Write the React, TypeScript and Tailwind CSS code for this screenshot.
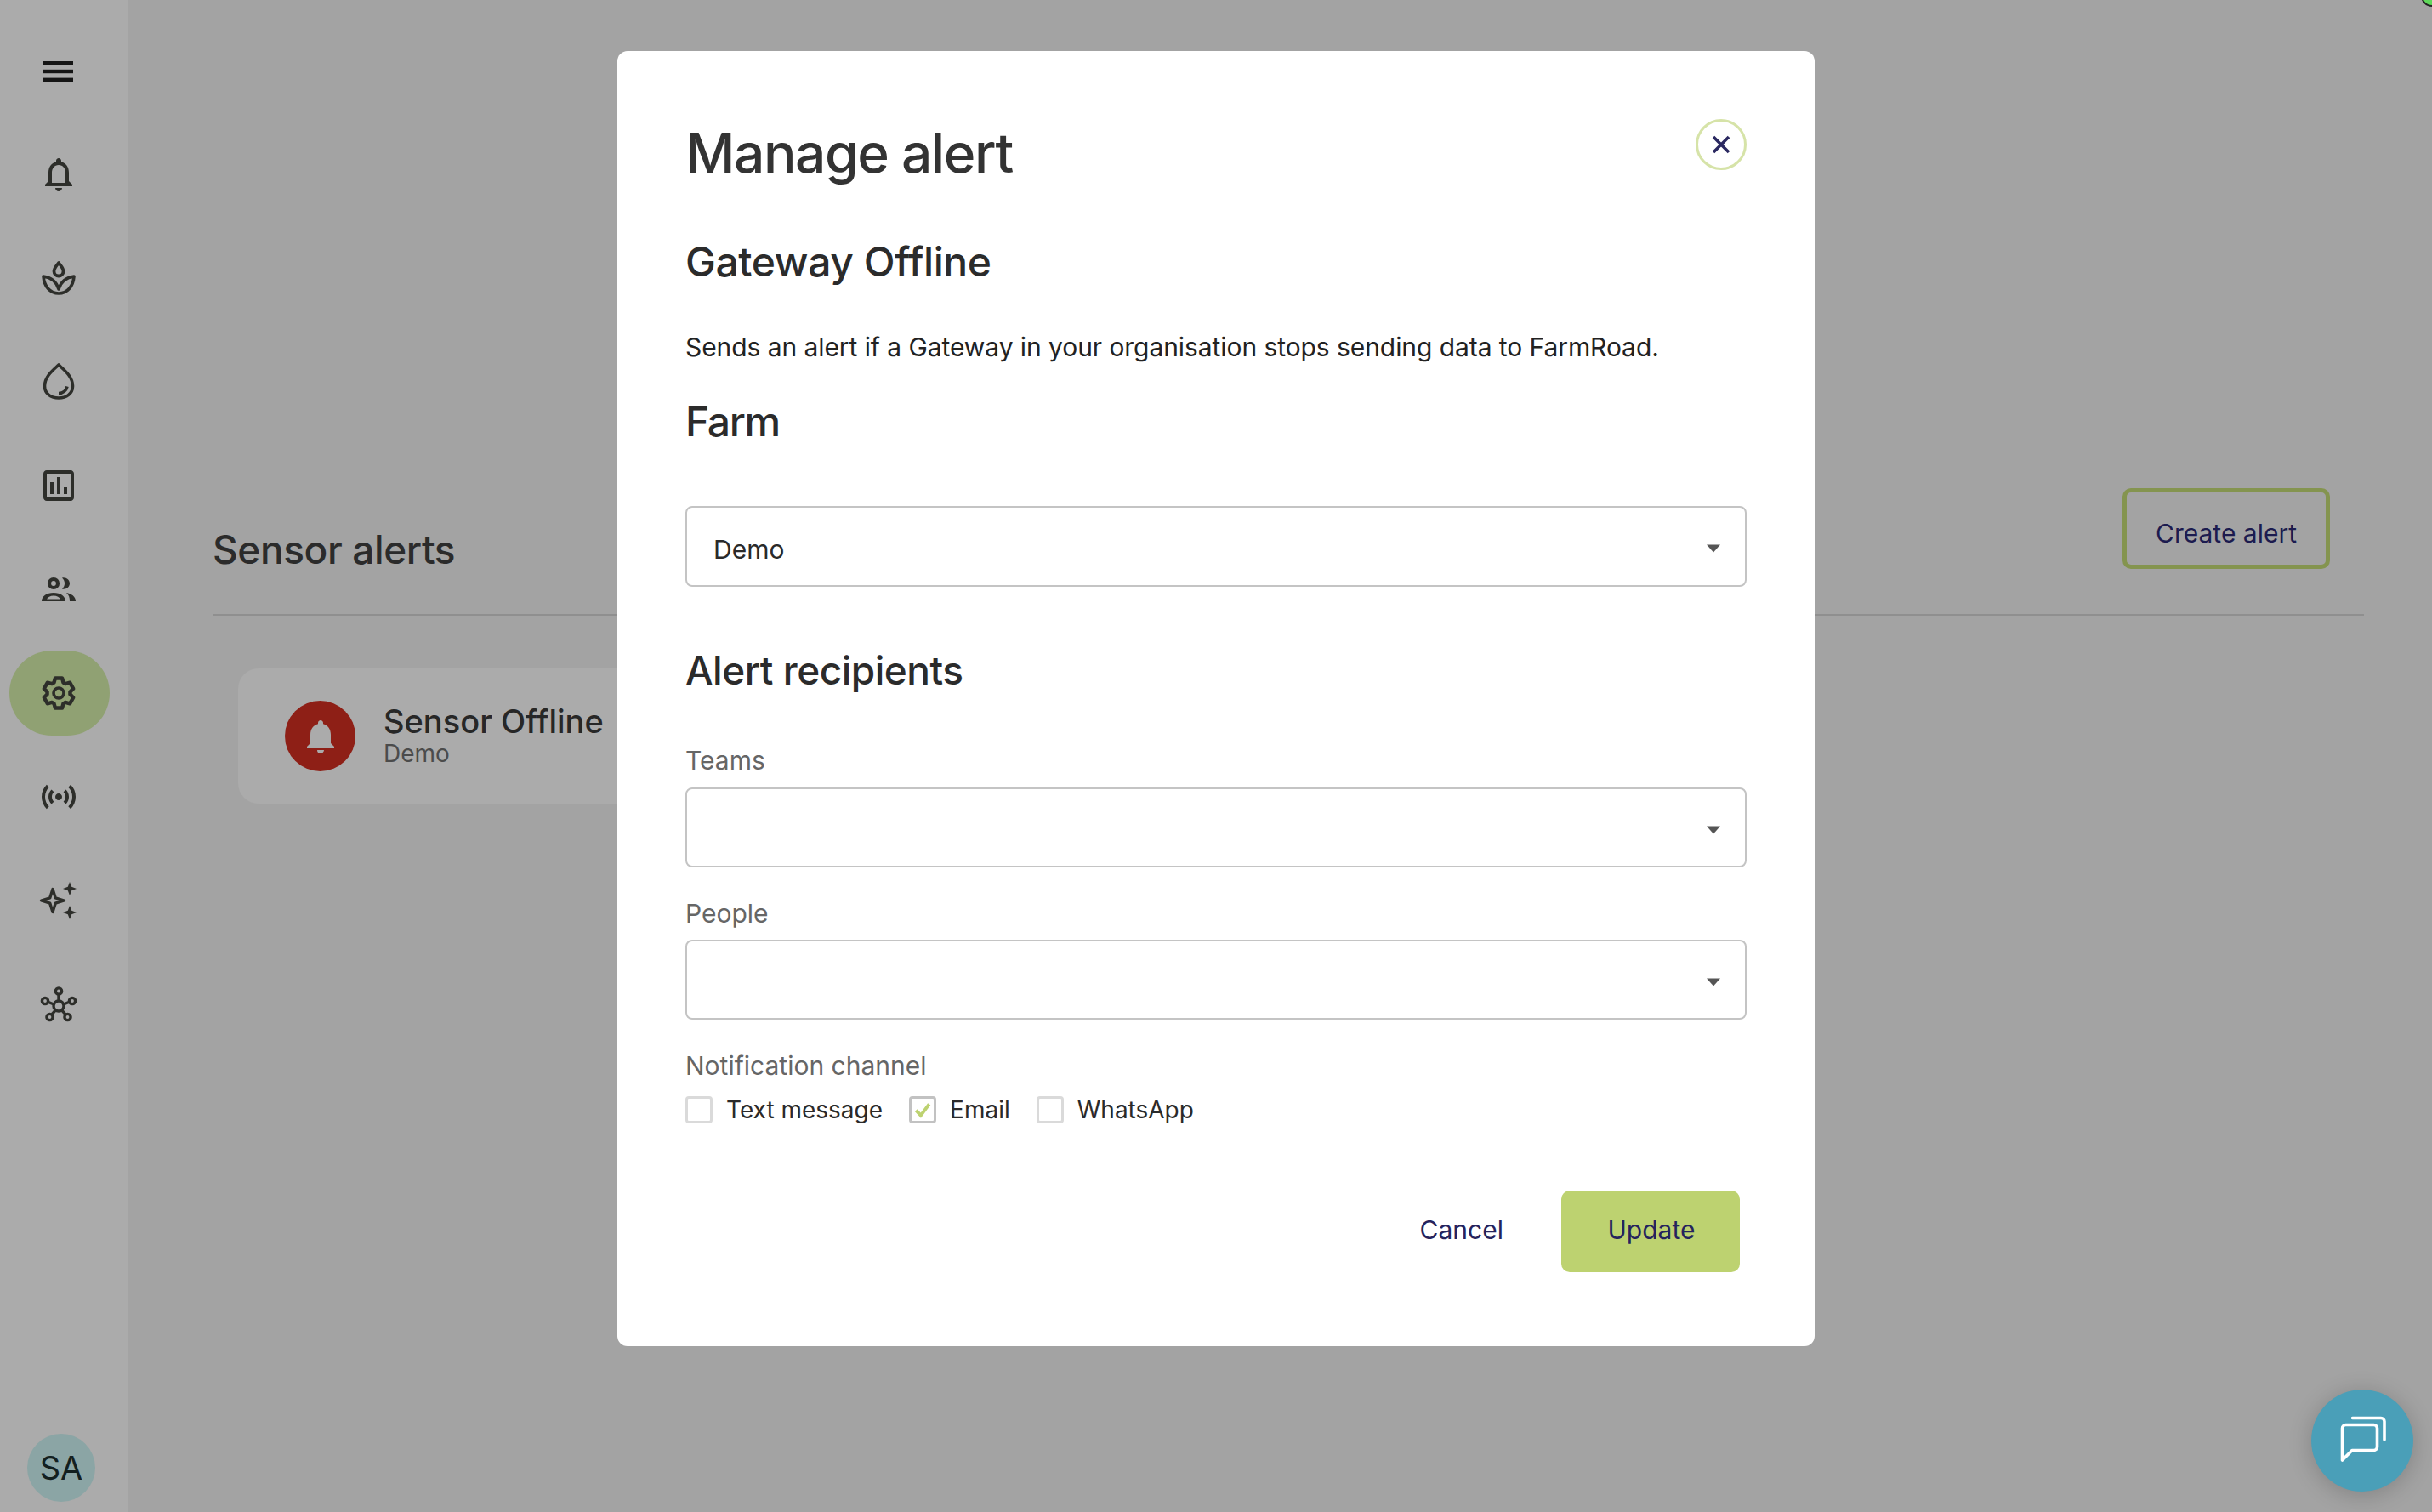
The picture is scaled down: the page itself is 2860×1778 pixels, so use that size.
import { MdNotifications, MdOutlineAssessment, MdOutlineNotifications, MdOutlineSensors } from "react-icons/md"

const iconClass = "size-[48px] text-[#2d2e2a]"

function gearPath() {
  const point = (r: number, deg: number) => {
    const rad = (deg * Math.PI) / 180
    return `${(24 + r * Math.cos(rad)).toFixed(2)} ${(24 + r * Math.sin(rad)).toFixed(2)}`
  }
  const parts: string[] = []
  for (let i = 0; i < 6; i++) {
    const a = -90 + i * 60
    parts.push(point(13.5, a - 24), point(18, a - 13), point(18, a + 13), point(13.5, a + 24))
  }
  return `M${parts.join(" L")} Z`
}

function LeafIcon() {
  return (
    <svg viewBox="0 0 48 48" fill="none" stroke="currentColor" strokeWidth="3.6" strokeLinejoin="round" className={iconClass}>
      <path d="M24 6 C21.5 9.5 18.5 12 18.5 16 a5.5 5.5 0 0 0 11 0 C29.5 12 26.5 9.5 24 6 Z" strokeWidth="3.8" />
      <path d="M24 42 C14 42 7 34 6 22 C14 23 21 27 24 37 C27 27 34 23 42 22 C41 34 34 42 24 42 Z" />
    </svg>
  )
}

function DropIcon() {
  return (
    <svg viewBox="0 0 48 48" fill="none" stroke="currentColor" strokeWidth="3.6" strokeLinejoin="round" className={iconClass}>
      <path d="M24 4 C19 9 7.5 17 7.5 29 C7.5 38 15 43 24 43 C33 43 40.5 38 40.5 29 C40.5 17 29 9 24 4 Z" />
      <path d="M24 37.5 C29.5 37.5 33 34 34 29.5" />
    </svg>
  )
}

function PeopleIcon() {
  return (
    <svg viewBox="0 0 48 48" fill="none" className={iconClass}>
      <circle cx="18" cy="17" r="5" stroke="currentColor" strokeWidth="4.2" />
      <path
        fill="currentColor"
        fillRule="evenodd"
        d="M4 38 C4 32 10 28 18 28 C26 28 32 32 32 38 Z M10 35.5 H26 C25 33.5 22 31.5 18 31.5 C14 31.5 11 33.5 10 35.5 Z"
      />
      <path fill="currentColor" d="M28 10.5 C33 9.5 37 13 37 17 C37 21 33 24.5 28 23.5 C30 21.5 31 19.5 31 17 C31 14.5 30 12.5 28 10.5 Z" />
      <path fill="currentColor" d="M33 28 C39 29 44 32.5 44 38 H37 C37 33.5 36 30.5 33 28 Z" />
    </svg>
  )
}

function GearIcon() {
  return (
    <svg viewBox="0 0 48 48" fill="none" stroke="currentColor" strokeWidth="4.4" strokeLinejoin="round" className={iconClass}>
      <path d={gearPath()} />
      <circle cx="24" cy="24" r="6" strokeWidth="3.6" />
    </svg>
  )
}

function SparkleIcon() {
  return (
    <svg viewBox="0 0 48 48" fill="none" className={iconClass}>
      <path
        d="M17 10.5 L20.2 20.8 L30.5 24 L20.2 27.2 L17 37.5 L13.8 27.2 L3.5 24 L13.8 20.8 Z"
        stroke="currentColor"
        strokeWidth="3.4"
        strokeLinejoin="round"
      />
      <path fill="currentColor" d="M37 2 L39.2 7.8 L45 10 L39.2 12.2 L37 18 L34.8 12.2 L29 10 L34.8 7.8 Z" />
      <path fill="currentColor" d="M37 30 L39.2 35.8 L45 38 L39.2 40.2 L37 46 L34.8 40.2 L29 38 L34.8 35.8 Z" />
    </svg>
  )
}

function NetworkIcon() {
  return (
    <svg viewBox="0 0 48 48" fill="none" stroke="currentColor" strokeWidth="3.4" className={iconClass}>
      <circle cx="24" cy="26" r="6" />
      <circle cx="24" cy="8.5" r="3.6" />
      <circle cx="8" cy="20" r="3.6" />
      <circle cx="40" cy="20" r="3.6" />
      <circle cx="13.5" cy="39" r="3.6" />
      <circle cx="34.5" cy="39" r="3.6" />
      <path d="M24 12 V20 M11.5 21.2 L18.3 24 M36.5 21.2 L29.7 24 M15.7 36.2 L20.4 30.8 M32.3 36.2 L27.6 30.8" />
    </svg>
  )
}

function ChatIcon() {
  return (
    <svg viewBox="0 0 60 60" fill="none" stroke="white" strokeWidth="3.6" strokeLinecap="round" strokeLinejoin="round" className="size-[60px]">
      <path d="M4.5 53 V15.5 a4 4 0 0 1 4 -4 H41.5 a4 4 0 0 1 4 4 V37.5 a4 4 0 0 1 -4 4 H16 Z" />
      <path d="M16.5 3.5 H50 a4 4 0 0 1 4 4 V29" />
    </svg>
  )
}

function Caret() {
  return (
    <svg viewBox="0 0 16 10" className="mt-[5px] h-[10px] w-[16px] fill-[#555555]">
      <path d="M0 0.5 H16 L8 9.5 Z" />
    </svg>
  )
}

function SelectBox({ value, height = "h-[94px]" }: { value?: string; height?: string }) {
  return (
    <div className={`flex ${height} items-center justify-between rounded-[8px] border-[2px] border-[#c4c4c4] pl-[31px] pr-[29px]`}>
      <span className="mt-[6px] text-[30px] leading-[44px] text-[#2a2a2a]">{value}</span>
      <Caret />
    </div>
  )
}

function Checkbox({ label, checked }: { label: string; checked?: boolean }) {
  return (
    <label className="flex items-center gap-[16px]">
      <span
        className={`flex size-[32px] items-center justify-center rounded-[4px] border-[3px] ${checked ? "border-[#c2c2c2]" : "border-[#dadada]"}`}
      >
        {checked && (
          <svg viewBox="0 0 20 20" className="size-[22px]" fill="none" stroke="#bdd270" strokeWidth="3.6">
            <path d="M3 10.5 L8 16 L17 4" />
          </svg>
        )}
      </span>
      <span className="text-[28px] leading-[40px] text-[#2a2a2a]">{label}</span>
    </label>
  )
}

const navIcons = [
  <MdOutlineNotifications key="alerts" className={iconClass} />,
  <LeafIcon key="crops" />,
  <DropIcon key="water" />,
  <MdOutlineAssessment key="reports" className={iconClass} />,
  <PeopleIcon key="people" />,
  <GearIcon key="settings" />,
  <MdOutlineSensors key="sensors" className={iconClass} />,
  <SparkleIcon key="insights" />,
  <NetworkIcon key="network" />,
]

export default function App() {
  return (
    <div className="relative flex h-[1778px] w-[2860px] overflow-hidden bg-[#a3a3a3] font-['Inter',sans-serif]">
      <aside className="flex w-[150px] shrink-0 flex-col bg-[#ababab] pt-[23px]">
        <div className="flex h-[121px] w-[136px] items-center justify-center">
          <svg viewBox="0 0 36 24" className="h-[24px] w-[36px] fill-[#151515]">
            <rect width="36" height="4.4" y="0" />
            <rect width="36" height="4.4" y="9.8" />
            <rect width="36" height="4.4" y="19.6" />
          </svg>
        </div>
        {navIcons.map((icon, i) => (
          <div key={i} className="flex h-[122px] w-[140px] items-center justify-center pr-[2px]">
            {i === 5 ? (
              <div className="ml-[2px] flex h-[100px] w-[118px] items-center justify-center rounded-[50px] bg-[#90a173] pr-[2px]">{icon}</div>
            ) : (
              icon
            )}
          </div>
        ))}
        <div className="mt-auto mb-[12px] ml-[32px] flex size-[80px] items-center justify-center rounded-full bg-[#8ba5a5] text-[38px] text-[#13201f]">
          SA
        </div>
      </aside>

      <main className="flex-1 pl-[100px] pr-[80px] pt-[574px]">
        <div className="flex justify-between border-b-[2px] border-[#8f8f8f] pb-[48px] pr-[40px]">
          <h2 className="self-end text-[46px] leading-[56px] font-medium tracking-[-0.4px] text-[#2b2b2b]">Sensor alerts</h2>
          <button className="mb-[5px] h-[95px] w-[244px] rounded-[10px] border-[5px] border-[#84944f] pt-[11px] text-[30px] text-[#1c1b4f]">
            Create alert
          </button>
        </div>
        <div className="mt-[62px] ml-[30px] flex h-[159px] w-[640px] items-center gap-[33px] rounded-[24px] bg-[#ababab] pl-[55px]">
          <div className="flex size-[83px] items-center justify-center rounded-full bg-[#8e1f16]">
            <MdNotifications className="size-[48px] text-[#ababab]" />
          </div>
          <div className="mb-[5px]">
            <div className="text-[38px] leading-[46px] font-medium text-[#272727]">Sensor Offline</div>
            <div className="text-[28px] leading-[30px] text-[#4b4b4b]">Demo</div>
          </div>
        </div>
      </main>

      <div className="absolute top-[-18px] right-[-13px] size-[26px] rounded-full border-[2px] border-[#222222] bg-[#5fd85a]" />

      <div className="absolute inset-0 flex items-start justify-center pt-[60px]">
        <section className="h-[1523px] w-[1408px] rounded-[12px] bg-white px-[80px] pt-[80px]">
          <div className="flex items-start justify-between">
            <h1 className="text-[64px] leading-[80px] font-medium tracking-[-1.4px] text-[#333333]">Manage alert</h1>
            <button className="flex size-[60px] items-center justify-center rounded-full border-[3px] border-[#d6e3a8]">
              <svg viewBox="0 0 24 24" className="size-[24px]" stroke="#2a2860" strokeWidth="3.6">
                <path d="M3 3 L21 21 M21 3 L3 21" />
              </svg>
            </button>
          </div>

          <h2 className="mt-[58px] text-[48px] leading-[60px] font-medium tracking-[-0.4px] text-[#2b2b2b]">Gateway Offline</h2>
          <p className="mt-[48px] text-[30px] leading-[44px] tracking-[-0.07px] text-[#222222]">
            Sends an alert if a Gateway in your organisation stops sending data to FarmRoad.
          </p>

          <h2 className="mt-[36px] text-[48px] leading-[60px] font-medium tracking-[-1.4px] text-[#2b2b2b]">Farm</h2>
          <div className="mt-[69px]">
            <SelectBox value="Demo" height="h-[95px]" />
          </div>

          <h2 className="mt-[68px] text-[46px] leading-[60px] font-medium tracking-[-0.5px] text-[#2b2b2b]">Alert recipients</h2>
          <div className="mt-[56px] text-[30px] leading-[40px] text-[#666666]">Teams</div>
          <div className="mt-[12px]">
            <SelectBox />
          </div>
          <div className="mt-[34px] text-[30px] leading-[40px] text-[#666666]">People</div>
          <div className="mt-[11px]">
            <SelectBox />
          </div>
          <div className="mt-[34px] text-[30px] leading-[40px] text-[#666666]">Notification channel</div>
          <div className="mt-[16px] flex h-[32px] items-center gap-[31px]">
            <Checkbox label="Text message" />
            <Checkbox label="Email" checked />
            <Checkbox label="WhatsApp" />
          </div>

          <div className="mt-[79px] flex items-center justify-end gap-[33px] pr-[8px]">
            <button className="h-[96px] px-[35px] pb-[3px] text-[30px] text-[#25235d]">Cancel</button>
            <button className="h-[96px] w-[210px] rounded-[10px] bg-[#bdd270] pb-[3px] pl-[2px] text-[30px] text-[#25235d]">Update</button>
          </div>
        </section>
      </div>

      <button className="absolute right-[22px] bottom-[24px] flex size-[120px] items-center justify-center rounded-full bg-[#4a9fb8] pl-[3px] shadow-[0_4px_28px_rgba(0,0,0,0.2)]">
        <ChatIcon />
      </button>
    </div>
  )
}
